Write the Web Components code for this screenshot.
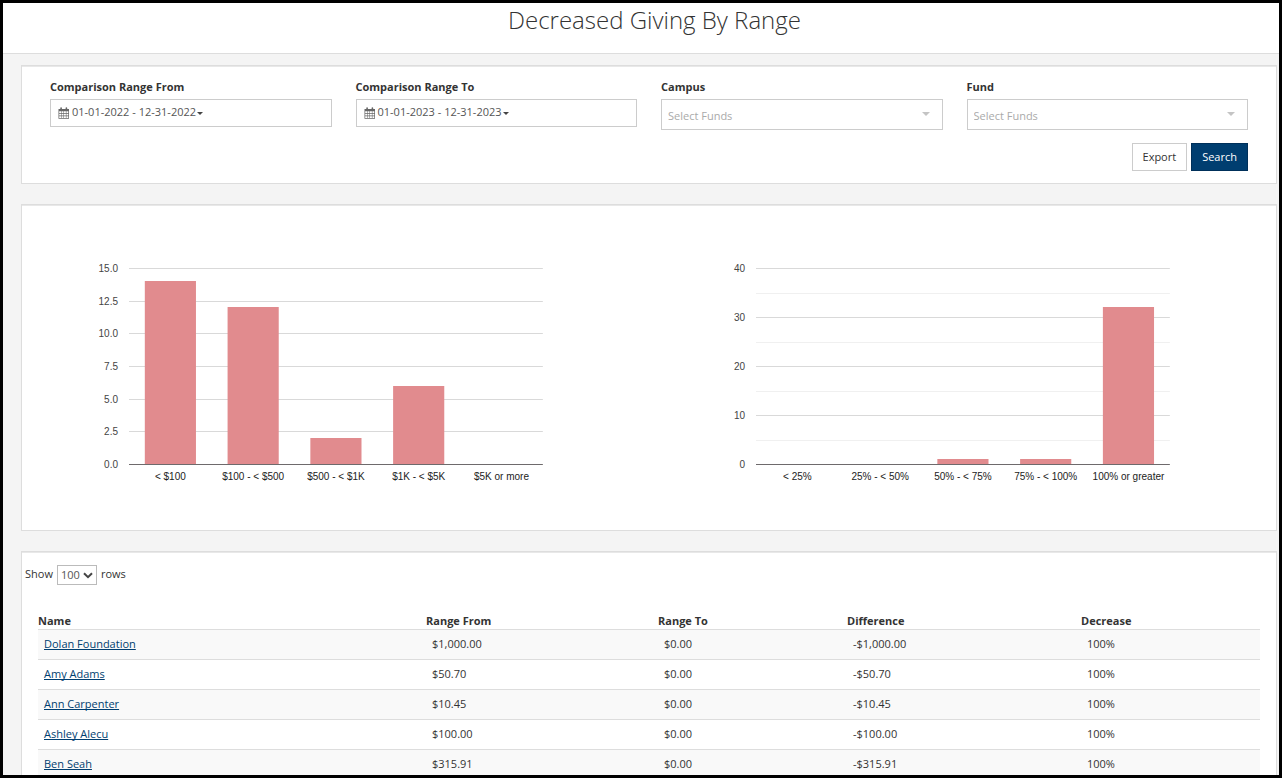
<!DOCTYPE html>
<html lang="en">
<head>
<meta charset="utf-8">
<meta name="viewport" content="width=device-width, initial-scale=1">
<title>Decreased Giving By Range</title>
<style>
  body { margin: 0; font-family: "Open Sans", "Noto Sans", sans-serif; font-size: 11px; line-height: 16px; color: #333; }
</style>
</head>
<body>
<report-page heading="Decreased Giving By Range">
  <report-card>
    <filter-form></filter-form>
  </report-card>
  <report-card>
    <chart-pair>
      <bar-chart name="Givers by amount of decrease" max="15" step="2.5" decimals="1" labels="&lt; $100|$100 - &lt; $500|$500 - &lt; $1K|$1K - &lt; $5K|$5K or more" values="14,12,2,6,0"></bar-chart>
      <bar-chart name="Givers by percentage of decrease" max="40" step="10" minor="5" decimals="0" labels="&lt; 25%|25% - &lt; 50%|50% - &lt; 75%|75% - &lt; 100%|100% or greater" values="0,0,1,1,32"></bar-chart>
    </chart-pair>
  </report-card>
  <report-card>
    <giving-table></giving-table>
  </report-card>
</report-page>

<script>
const attach = (el, html) => { el.attachShadow({ mode: 'open' }).innerHTML = html; };

/* Framed page: title bar above a stack of cards */
class ReportPage extends HTMLElement {
  connectedCallback() {
    attach(this, `
      <style>
        :host { display: flex; flex-direction: column; box-sizing: border-box; height: 100vh; overflow: hidden; border: 3px solid #000; background: #f4f4f4; }
        header { flex: none; box-sizing: border-box; height: 51px; padding-left: 27px; background: #fff; border-bottom: 1px solid #ddd; }
        h1 { margin: 0; font-size: 24px; line-height: 34px; font-weight: 300; text-align: center; }
        main { display: flex; flex-direction: column; gap: 20px; padding: 11px 2px 20px 18px; }
      </style>
      <header><h1>${this.getAttribute('heading')}</h1></header>
      <main><slot></slot></main>`);
  }
}
customElements.define('report-page', ReportPage);

class ReportCard extends HTMLElement {
  connectedCallback() {
    attach(this, `
      <style>
        :host { display: block; background: #fff; border: 1px solid #ddd; box-shadow: inset 0 1px 0 #e8e8e8; }
      </style>
      <slot></slot>`);
  }
}
customElements.define('report-card', ReportCard);

/* Date range button with calendar icon and caret */
class DateRange extends HTMLElement {
  connectedCallback() {
    attach(this, `
      <style>
        :host { display: block; }
        label { display: block; margin-bottom: 4px; font-weight: 700; }
        button { display: flex; align-items: center; width: 100%; height: 28px; margin: 0; padding: 0 7px 2px; border: 1px solid #ccc; border-radius: 0; background: #fff; font: inherit; color: #555; text-align: left; }
        .calendar { margin: 2px 2px 0 0; }
        .caret { margin: 2px 0 0 1px; }
      </style>
      <label for="range">${this.getAttribute('label')}</label>
      <button id="range" type="button">
        <svg class="calendar" width="12" height="12" viewBox="0 0 12 12" aria-hidden="true">
          <path fill="#666" d="M.5 2h1.8V1a.8.8 0 0 1 1.6 0v1h3.7V1a.8.8 0 0 1 1.6 0v1H11v9.8H.5z"/>
          <path fill="#fff" d="M1.2 4.2h1.9v1.9H1.2zM3.6 4.2h1.9v1.9H3.6zM6 4.2h1.9v1.9H6zM8.4 4.2h1.9v1.9H8.4zM1.2 6.7h1.9v1.9H1.2zM3.6 6.7h1.9v1.9H3.6zM6 6.7h1.9v1.9H6zM8.4 6.7h1.9v1.9H8.4zM1.2 9.2h1.9v1.9H1.2zM3.6 9.2h1.9v1.9H3.6zM6 9.2h1.9v1.9H6zM8.4 9.2h1.9v1.9H8.4z"/>
        </svg>
        <span>${this.getAttribute('value')}</span>
        <svg class="caret" width="6" height="3" viewBox="0 0 6 3" aria-hidden="true"><path fill="#444" d="M0 0h6L3 3z"/></svg>
      </button>`);
  }
}
customElements.define('date-range', DateRange);

class SelectField extends HTMLElement {
  connectedCallback() {
    attach(this, `
      <style>
        :host { display: block; }
        label { display: block; margin-bottom: 4px; font-weight: 700; }
        .box { display: grid; align-items: center; }
        .box > * { grid-area: 1 / 1; }
        select { appearance: none; box-sizing: border-box; width: 100%; height: 31px; margin: 0; padding: 3px 30px 0 6px; border: 1px solid #ccc; border-radius: 0; background: #fff; font: inherit; color: #aaa; }
        svg { justify-self: end; margin: 0 13px 2px 0; pointer-events: none; }
      </style>
      <label for="choice">${this.getAttribute('label')}</label>
      <div class="box">
        <select id="choice"><option>Select Funds</option></select>
        <svg width="8" height="4" viewBox="0 0 8 4" aria-hidden="true"><path fill="#c4c4c4" d="M0 0h8L4 4z"/></svg>
      </div>`);
  }
}
customElements.define('select-field', SelectField);

class FilterForm extends HTMLElement {
  connectedCallback() {
    attach(this, `
      <style>
        :host { display: block; padding: 13px 28px 12px; }
        .fields { display: grid; grid-template-columns: repeat(4, minmax(0, 1fr)); gap: 24px; }
        .actions { display: flex; justify-content: flex-end; gap: 4px; margin-top: 13px; }
        button { height: 28px; margin: 0; padding: 0 10px; border: 1px solid #ccc; border-radius: 0; background: #fff; font: inherit; color: #333; }
        .primary { background: #003e70; border-color: #00305a; color: #fff; }
      </style>
      <div class="fields">
        <date-range label="Comparison Range From" value="01-01-2022 - 12-31-2022"></date-range>
        <date-range label="Comparison Range To" value="01-01-2023 - 12-31-2023"></date-range>
        <select-field label="Campus"></select-field>
        <select-field label="Fund"></select-field>
      </div>
      <div class="actions">
        <button type="button">Export</button>
        <button type="button" class="primary">Search</button>
      </div>`);
  }
}
customElements.define('filter-form', FilterForm);

class ChartPair extends HTMLElement {
  connectedCallback() {
    attach(this, `
      <style>:host { display: grid; grid-template-columns: repeat(2, minmax(0, 1fr)); }</style>
      <slot></slot>`);
  }
}
customElements.define('chart-pair', ChartPair);

/* Column chart; x positions are percentages, so the plot follows its width */
class BarChart extends HTMLElement {
  connectedCallback() {
    const num = n => Number(this.getAttribute(n));
    const H = 196, max = num('max'), step = num('step'), minor = num('minor');
    const labels = this.getAttribute('labels').split('|');
    const values = this.getAttribute('values').split(',').map(Number);
    const slot = 100 / labels.length;
    const esc = s => s.replace(/</g, '&lt;');
    const y = v => Math.round(H - v / max * H);
    let grid = '', ticks = '', bars = '';
    if (minor) for (let v = minor; v < max; v += step) grid += `<rect class="minor" x="0" y="${y(v)}" width="100%" height="1"/>`;
    for (let v = 0; v <= max; v += step) {
      if (v) grid += `<rect class="major" x="0" y="${y(v)}" width="100%" height="1"/>`;
      ticks += `<text class="tick" x="-11" y="${y(v) + 4}">${v.toFixed(num('decimals'))}</text>`;
    }
    values.forEach((v, i) => {
      const mid = slot * (i + .5), w = slot * .618;
      if (v) bars += `<rect class="bar" x="${mid - w / 2}%" y="${y(v)}" width="${w}%" height="${H - y(v)}"/>`;
      ticks += `<text class="cat" x="${mid}%" y="${H + 16}">${esc(labels[i])}</text>`;
    });
    attach(this, `
      <style>
        :host { display: block; padding: 63px 17% 65px; }
        svg { display: block; width: 100%; height: 197px; overflow: visible; }
        text { font-family: "Liberation Sans", Arial, sans-serif; font-size: 10px; }
        .tick { fill: #444; text-anchor: end; }
        .cat { fill: #222; text-anchor: middle; }
        .major { fill: #d9d9d9; }
        .minor { fill: #f0f0f0; }
        .bar { fill: #e18b8e; }
        .base { fill: #6e6a6c; }
      </style>
      <svg role="img" aria-label="${this.getAttribute('name')}">${grid}${bars}<rect class="base" x="0" y="${H}" width="100%" height="1"/>${ticks}</svg>`);
  }
}
customElements.define('bar-chart', BarChart);

class GivingTable extends HTMLElement {
  connectedCallback() {
    const rows = [
      ['Dolan Foundation', '$1,000.00', '$0.00', '-$1,000.00', '100%'],
      ['Amy Adams', '$50.70', '$0.00', '-$50.70', '100%'],
      ['Ann Carpenter', '$10.45', '$0.00', '-$10.45', '100%'],
      ['Ashley Alecu', '$100.00', '$0.00', '-$100.00', '100%'],
      ['Ben Seah', '$315.91', '$0.00', '-$315.91', '100%'],
    ];
    attach(this, `
      <style>
        :host { display: block; padding: 13px 16px 16px 3px; }
        .length { display: flex; align-items: flex-start; gap: 4px; height: 20px; line-height: 18px; }
        .box { display: grid; align-items: center; }
        .box > * { grid-area: 1 / 1; }
        select { appearance: none; box-sizing: border-box; width: 40px; height: 20px; margin: 0; padding: 0 0 0 3px; border: 1px solid #bbb; border-radius: 0; background: #fff; font: inherit; color: #555; }
        svg { justify-self: end; margin-right: 4px; pointer-events: none; }
        table { width: calc(100% - 13px); margin: 28px 0 0 13px; border-collapse: collapse; table-layout: fixed; }
        .c1 { width: 388px; } .c2 { width: 232px; } .c3 { width: 189px; } .c4 { width: 234px; } .c5 { width: 179px; }
        th { height: 16px; padding: 0; text-align: left; font-weight: 700; }
        td { height: 27px; padding: 0 6px 2px; border-top: 1px solid #ddd; }
        tbody tr:nth-child(odd) { background: #f9f9f9; }
        a { color: #003e70; text-decoration: underline; text-decoration-skip-ink: none; text-underline-offset: 1px; }
      </style>
      <div class="length">
        <label for="rows">Show</label>
        <span class="box">
          <select id="rows"><option>100</option></select>
          <svg width="10" height="7" viewBox="0 0 10 7" aria-hidden="true"><path d="M1 1.2l4 4 4-4" fill="none" stroke="#444" stroke-width="2"/></svg>
        </span>
        <span>rows</span>
      </div>
      <table>
        <colgroup><col class="c1"><col class="c2"><col class="c3"><col class="c4"><col class="c5"></colgroup>
        <thead><tr>${['Name', 'Range From', 'Range To', 'Difference', 'Decrease'].map(h => `<th scope="col">${h}</th>`).join('')}</tr></thead>
        <tbody>${rows.map(r => `<tr>${r.map((c, i) => `<td>${i ? c : `<a href="#">${c}</a>`}</td>`).join('')}</tr>`).join('')}</tbody>
      </table>`);
  }
}
customElements.define('giving-table', GivingTable);
</script>
</body>
</html>
